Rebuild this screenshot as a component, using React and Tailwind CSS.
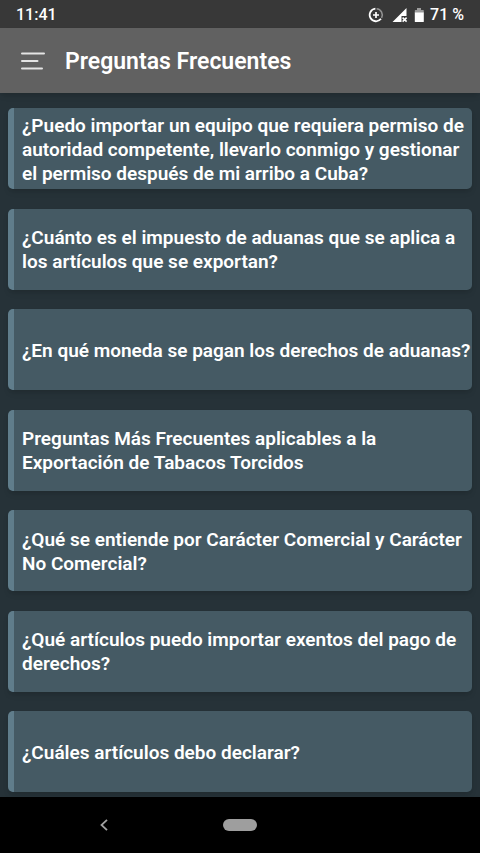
import React from 'react';

const questions = [
    '¿Puedo importar un equipo que requiera permiso de autoridad competente, llevarlo conmigo y gestionar el permiso después de mi arribo a Cuba?',
    '¿Cuánto es el impuesto de aduanas que se aplica a los artículos que se exportan?',
    '¿En qué moneda se pagan los derechos de aduanas?',
    'Preguntas Más Frecuentes aplicables a la Exportación de Tabacos Torcidos',
    '¿Qué se entiende por Carácter Comercial y Carácter No Comercial?',
    '¿Qué artículos puedo importar exentos del pago de derechos?',
    '¿Cuáles artículos debo declarar?',
];

const DataSaverIcon = () => (
    <svg className="w-4 h-4" viewBox="0 0 16 16" fill="none" stroke="currentColor" aria-hidden="true">
        <path d="M8.6 1.7A6.3 6.3 0 0 1 13.6 10.8" strokeWidth="1.6" opacity="0.45" />
        <path d="M7.4 1.7A6.3 6.3 0 1 0 13 11.8" strokeWidth="1.8" />
        <path d="M8 5v6M5 8h6" strokeWidth="1.7" />
    </svg>
);

const SignalIcon = () => (
    <svg className="w-4 h-4" viewBox="0 0 16 16" aria-hidden="true">
        <path d="M.5 15 14.5 1v8h-5v6z" fill="currentColor" />
        <path d="m10.6 10.6 4 4m0-4-4 4" stroke="currentColor" strokeWidth="1.5" />
    </svg>
);

const BatteryIcon = () => (
    <svg className="w-[10px] h-4" viewBox="0 0 10 16" fill="currentColor" aria-hidden="true">
        <path d="M3 1h4v2h2.2a.6.6 0 0 1 .6.6V6H.8V3.6a.6.6 0 0 1 .6-.6H3z" opacity="0.5" />
        <path d="M.8 5.6h9v8.8a.6.6 0 0 1-.6.6H1.4a.6.6 0 0 1-.6-.6z" />
    </svg>
);

const StatusBar = () => (
    <div className="h-7 shrink-0 flex items-center justify-between pt-0.5 px-4 bg-[#383838] text-base font-medium">
        <span>11:41</span>
        <div className="flex items-center">
            <DataSaverIcon />
            <span className="ml-2"><SignalIcon /></span>
            <span className="mx-1.5"><BatteryIcon /></span>
            <span>71 %</span>
        </div>
    </div>
);

const Header = () => (
    <header className="h-[65px] shrink-0 flex items-center gap-5 px-5 bg-[#616161] shadow-md">
        <button type="button" aria-label="Menú" className="w-[25px] h-6">
            <svg className="w-[25px] h-6" viewBox="0 0 25 24" fill="none" stroke="#e4e4e4" strokeWidth="2" strokeLinecap="round">
                <path d="M2 4.5h22M2 12h15.5M2 19.5h20" />
            </svg>
        </button>
        <h1 className="text-[23px] font-semibold pt-1">Preguntas Frecuentes</h1>
    </header>
);

const QuestionCard = ({ text }) => (
    <li>
        <button
            type="button"
            className="w-full h-[81px] flex items-center pt-0.5 pl-2 text-left text-[19px] leading-[24px] font-semibold bg-[#455a64] border-l-6 border-[#607d8b] rounded-[5px] shadow-md"
        >
            {text}
        </button>
    </li>
);

const NavBar = () => (
    <nav className="h-14 shrink-0 grid grid-cols-[1fr_34px_1fr] items-center bg-black">
        <button type="button" aria-label="Atrás" className="justify-self-center ml-[-16px]">
            <svg className="w-3 h-3" viewBox="0 0 12 12" fill="none" stroke="#a0a0a0" strokeWidth="1.8">
                <path d="M9 .8 3.5 6 9 11.2" />
            </svg>
        </button>
        <button type="button" aria-label="Inicio" className="h-3 rounded-full bg-[#9e9e9e]"></button>
    </nav>
);

const App = () => {
    return (
        <div className="min-h-screen flex flex-col bg-[#263238] text-white font-['Roboto',sans-serif]">
            <StatusBar />
            <Header />
            <main className="flex-1 flex flex-col">
                <ul className="flex-1 flex flex-col justify-between pt-[15px] pb-[5px] px-2">
                    {questions.map((question) => (
                        <QuestionCard key={question} text={question} />
                    ))}
                </ul>
            </main>
            <NavBar />
        </div>
    );
};

export default App;
